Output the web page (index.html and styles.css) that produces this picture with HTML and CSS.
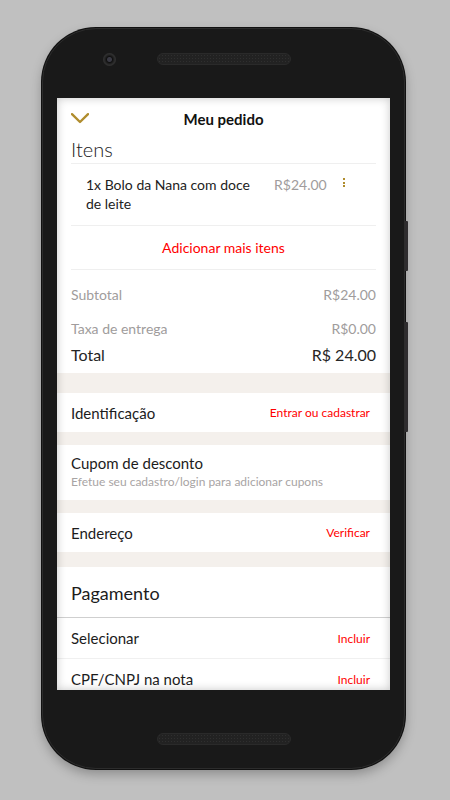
FILE: index.html
```html
<!DOCTYPE html>
<html lang="pt-BR">
<head>
<meta charset="utf-8">
<title>Meu pedido</title>
<link rel="stylesheet" href="styles.css">
</head>
<body>
<div class="phone">
  <span class="side-btn btn-a"></span>
  <span class="side-btn btn-b"></span>
  <div class="phone-top">
    <span class="camera"></span>
    <span class="speaker"></span>
    <span></span>
  </div>
  <div class="screen">
    <header class="app-header">
      <svg class="chev" width="18" height="11" viewBox="0 0 18 11"><path d="M1 1.2 L9 9 L17 1.2" fill="none" stroke="#b08d2e" stroke-width="2.4" stroke-linecap="round" stroke-linejoin="round"/></svg>
      <h1 class="app-title">Meu pedido</h1>
      <span></span>
    </header>

    <section class="items">
      <h2 class="items-title">Itens</h2>
      <div class="item">
        <div class="item-name">1x Bolo da Nana com doce de leite</div>
        <div class="item-price">R$24.00</div>
        <div class="kebab"><i></i><i></i><i></i></div>
      </div>
      <div class="add-more">Adicionar mais itens</div>
      <div class="totals">
        <div class="tot-row sub"><span>Subtotal</span><span>R$24.00</span></div>
        <div class="tot-row fee"><span>Taxa de entrega</span><span>R$0.00</span></div>
        <div class="tot-row total"><span>Total</span><span>R$ 24.00</span></div>
      </div>
    </section>

    <div class="band band-20"></div>
    <div class="row">
      <span class="row-label">Identificação</span>
      <span class="link">Entrar ou cadastrar</span>
    </div>
    <div class="band band-13"></div>
    <div class="coupon">
      <div class="row-label">Cupom de desconto</div>
      <div class="coupon-sub">Efetue seu cadastro/login para adicionar cupons</div>
    </div>
    <div class="band band-13"></div>
    <div class="row">
      <span class="row-label">Endereço</span>
      <span class="link">Verificar</span>
    </div>
    <div class="band band-15"></div>
    <div class="pay-title">Pagamento</div>
    <div class="row pay-row first">
      <span class="row-label">Selecionar</span>
      <span class="link">Incluir</span>
    </div>
    <div class="row pay-row">
      <span class="row-label">CPF/CNPJ na nota</span>
      <span class="link">Incluir</span>
    </div>
  </div>
  <div class="phone-bottom">
    <span class="speaker"></span>
  </div>
</div>
</body>
</html>
```
FILE: styles.css
```css
* { box-sizing: border-box; }
html, body { margin: 0; padding: 0; }
body {
  background: #c0c0c0;
  width: 450px;
  height: 800px;
  overflow: hidden;
  padding-top: 28px;
  font-family: "Lato", "Noto Sans", sans-serif;
}
.phone {
  position: relative;
  margin-left: 42px;
  width: 363px;
  height: 741px;
  background: #191919;
  border-radius: 54px;
  border: 1px solid #2c2c2c;
  box-shadow: 0 0 0 1px #111, 0 5px 12px rgba(0,0,0,0.28);
  display: flex;
  flex-direction: column;
}
.side-btn {
  position: absolute;
  right: -4px;
  width: 3px;
  background: #2e2c2e;
  border-radius: 0 1px 1px 0;
}
.btn-a { top: 192px; height: 50px; }
.btn-b { top: 293px; height: 110px; }

.phone-top {
  height: 69px;
  display: grid;
  grid-template-columns: 1fr auto 1fr;
  align-items: start;
}
.camera {
  justify-self: start;
  margin-left: 60px;
  margin-top: 24px;
  width: 13px;
  height: 13px;
  border-radius: 50%;
  background: radial-gradient(circle at 50% 50%, #3a3a44 0 2px, #101010 3px, #2a2a2a 5px, #333 6.5px);
}
.speaker {
  display: block;
  width: 134px;
  height: 12px;
  border-radius: 6px;
  background-color: #222;
  background-image: radial-gradient(circle, #2f2f2f 0.7px, transparent 1px);
  background-size: 3px 3px;
  border: 1px solid #2a2a2a;
}
.phone-top .speaker { margin-top: 24px; }

.screen {
  position: relative;
  margin-left: 14px;
  width: 333px;
  height: 592px;
  background: #fff;
  overflow: hidden;
}
.screen::after {
  content: "";
  position: absolute;
  inset: 0;
  box-shadow: inset 0 0 10px rgba(0,0,0,0.22);
  pointer-events: none;
}
.phone-bottom {
  flex: 1;
  display: flex;
  justify-content: center;
  padding-top: 43px;
}

/* header */
.app-header {
  height: 40px;
  display: grid;
  grid-template-columns: 1fr auto 1fr;
  align-items: center;
  padding: 0 14px;
}
.chev { display: block; }
.app-title {
  margin: 0;
  font-size: 15px;
  font-weight: 700;
  color: #111;
  line-height: 20px;
  padding-top: 2px;
}

.items { padding: 0 14px; }
.items-title {
  margin: 0;
  font-weight: 300;
  font-size: 20px;
  line-height: 22px;
  color: #1a1a1a;
  padding-bottom: 3px;
  border-bottom: 1px solid #efefef;
}
.item {
  display: flex;
  align-items: flex-start;
  padding: 11px 0 12px 15px;
  border-bottom: 1px solid #efefef;
  color: #222;
}
.item-name {
  width: 180px;
  font-size: 14px;
  line-height: 19px;
}
.item-price {
  margin-left: 8px;
  font-size: 14px;
  line-height: 19px;
  color: #a09c9c;
}
.kebab {
  margin-left: 16px;
  padding-top: 3px;
  display: flex;
  flex-direction: column;
  gap: 1.5px;
}
.kebab i {
  display: block;
  width: 2px;
  height: 2px;
  background: #b08d2e;
}
.add-more {
  height: 44px;
  line-height: 44px;
  text-align: center;
  color: #ff0000;
  font-size: 14px;
  border-bottom: 1px solid #efefef;
}
.totals { padding: 14px 0 9px; }
.tot-row {
  display: flex;
  justify-content: space-between;
  align-items: center;
  height: 20px;
  font-size: 14px;
  color: #a09c9c;
}
.tot-row.fee { margin-top: 14px; }
.tot-row.total {
  margin-top: 6px;
  font-size: 16px;
  color: #262626;
}

.band { background: #f4f0ec; }
.band-20 { height: 20px; }
.band-13 { height: 13px; }
.band-15 { height: 15px; }

.row {
  height: 39px;
  display: flex;
  align-items: center;
  justify-content: space-between;
  padding: 0 20px 0 14px;
}
.row-label {
  font-size: 15px;
  color: #1c1c1c;
}
.link {
  font-size: 12px;
  color: #ff0000;
}
.coupon {
  height: 55px;
  padding: 9px 14px 0;
}
.coupon .row-label { line-height: 18px; }
.coupon-sub {
  margin-top: 2px;
  font-size: 12px;
  line-height: 16px;
  color: #a8a4a4;
}
.pay-title {
  height: 51px;
  padding: 0 14px;
  display: flex;
  align-items: center;
  font-size: 18px;
  color: #1c1c1c;
  border-bottom: 1px solid #cfcfcf;
  padding-top: 1px;
}
.pay-row { height: 41px; border-bottom: 1px solid #f0f0f0; }
```
